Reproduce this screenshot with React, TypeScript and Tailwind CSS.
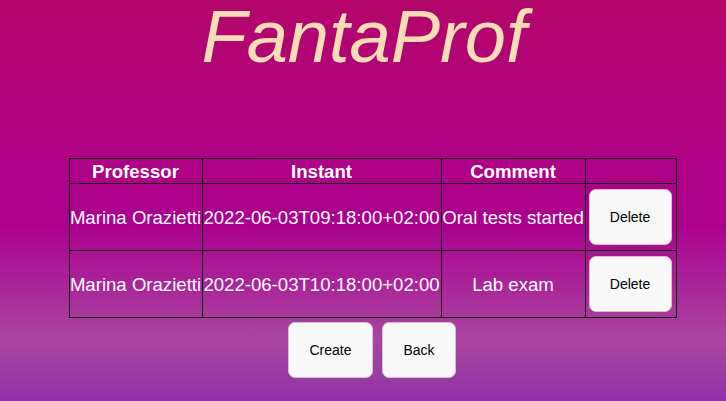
import React from "react";

const rows = [
  { prof: "Marina Orazietti", instant: "2022-06-03T09:18:00+02:00", comment: "Oral tests started" },
  { prof: "Marina Orazietti", instant: "2022-06-03T10:18:00+02:00", comment: "Lab exam" },
];

function Btn({ label, w }: { label: string; w: string }) {
  return (
    <button
      className={`${w} h-[56px] bg-[#f8f8f8] border border-[#c9c9c9] rounded-[7px] text-[14px] leading-[16px] text-black flex items-center justify-center`}
      style={{ fontFamily: '"Liberation Sans", Arial, sans-serif' }}
    >
      {label}
    </button>
  );
}

export default function App() {
  return (
    <div
      className="w-[726px] h-[401px] overflow-hidden bg-[linear-gradient(to_bottom,#b4056a_0%,#ac0090_56%,#a946a0_85%,#9230a8_100%)] flex flex-col items-center"
      style={{ fontFamily: '"Liberation Sans", Arial, sans-serif' }}
    >
      <h1 className="text-[74px] leading-[74px] italic text-[#f5deb3] ml-[2px]">FantaProf</h1>
      <div className="flex flex-col items-center pl-[19px] mt-[84px]">
        <table className="border-collapse text-white text-[18.6px] leading-[21px]">
          <thead>
            <tr className="h-[25px]">
              <th className="border border-black w-[133px] font-bold p-0">Professor</th>
              <th className="border border-black w-[239px] font-bold p-0">Instant</th>
              <th className="border border-black w-[144px] font-bold p-0">Comment</th>
              <th className="border border-black w-[91px] p-0"></th>
            </tr>
          </thead>
          <tbody>
            {rows.map((r, i) => (
              <tr key={i} className="h-[67px]">
                <td className="border border-black text-center p-0 whitespace-nowrap">{r.prof}</td>
                <td className="border border-black text-center p-0 whitespace-nowrap">{r.instant}</td>
                <td className="border border-black text-center p-0 whitespace-nowrap">{r.comment}</td>
                <td className="border border-black p-0">
                  <div className="flex justify-center pr-[1px]">
                    <Btn label="Delete" w="w-[83px]" />
                  </div>
                </td>
              </tr>
            ))}
          </tbody>
        </table>
        <div className="flex gap-[9px] mt-[4px] pr-[1px]">
          <Btn label="Create" w="w-[85px]" />
          <Btn label="Back" w="w-[74px]" />
        </div>
      </div>
    </div>
  );
}
